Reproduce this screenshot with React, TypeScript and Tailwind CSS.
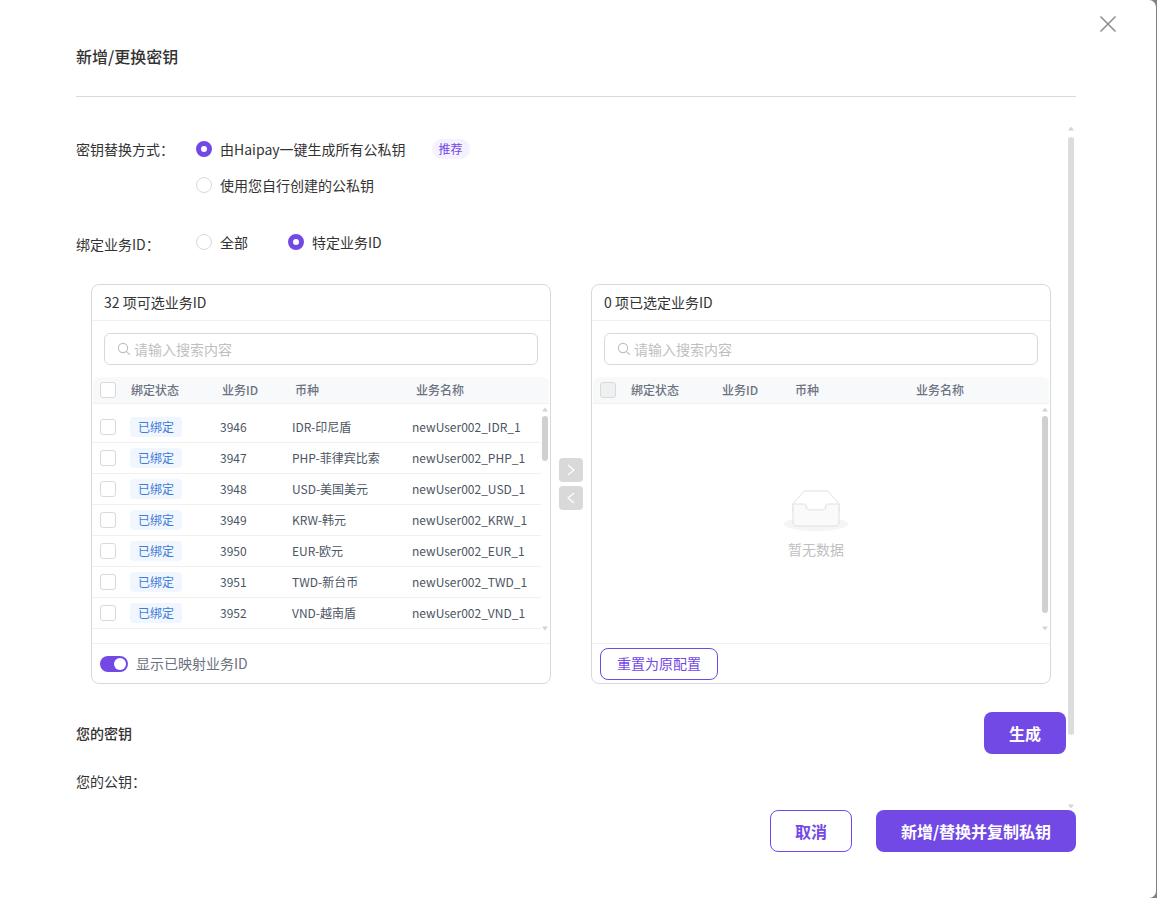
import React from 'react';

const rows = [
  { id: '3946', currency: 'IDR-印尼盾', name: 'newUser002_IDR_1' },
  { id: '3947', currency: 'PHP-菲律宾比索', name: 'newUser002_PHP_1' },
  { id: '3948', currency: 'USD-美国美元', name: 'newUser002_USD_1' },
  { id: '3949', currency: 'KRW-韩元', name: 'newUser002_KRW_1' },
  { id: '3950', currency: 'EUR-欧元', name: 'newUser002_EUR_1' },
  { id: '3951', currency: 'TWD-新台币', name: 'newUser002_TWD_1' },
  { id: '3952', currency: 'VND-越南盾', name: 'newUser002_VND_1' },
];

function Radio({ checked, label }: { checked?: boolean; label: string }) {
  return (
    <div className="flex items-center h-[22px]">
      <span
        className={
          checked
            ? 'w-4 h-4 rounded-full border-[5px] border-[#7349e5] bg-white'
            : 'w-4 h-4 rounded-full border border-[#d9d9d9] bg-white'
        }
      />
      <span className="ml-2 text-[14px] text-[#333]">{label}</span>
    </div>
  );
}

function Checkbox({ disabled }: { disabled?: boolean }) {
  return (
    <span
      className={
        disabled
          ? 'block w-4 h-4 rounded-[3px] border border-[#d9d9d9] bg-[#f0f0f0]'
          : 'block w-4 h-4 rounded-[3px] border border-[#d9d9d9] bg-white'
      }
    />
  );
}

// 滚动条只是画出来的，盖在内容上
function Scrollbar({ thumbTop, thumbHeight, className, color }: { thumbTop: number; thumbHeight: number; className: string; color: string }) {
  return (
    <div className={`absolute w-[6px] ${className}`}>
      <svg className="absolute -top-[1px] left-0" width="6" height="5" viewBox="0 0 6 5">
        <path d="M3 0.5L6 4.5H0z" fill="#d4d4d8" />
      </svg>
      <div className={`absolute left-0 w-[6px] rounded-[3px] ${color}`} style={{ top: thumbTop, height: thumbHeight }} />
      <svg className="absolute -bottom-[1px] left-0" width="6" height="5" viewBox="0 0 6 5">
        <path d="M3 4.5L6 0.5H0z" fill="#d4d4d8" />
      </svg>
    </div>
  );
}

function Search() {
  return (
    <div className="mx-3 mt-3 h-8 rounded-[6px] border border-[#d9d9d9] flex items-center pl-3">
      <svg width="14" height="14" viewBox="0 0 14 14" fill="none" stroke="#bfbfbf" strokeWidth="1.1">
        <circle cx="6" cy="6" r="4.6" />
        <path d="M9.4 9.4L12.8 12.8" />
      </svg>
      <span className="ml-[3px] text-[14px] text-[#bfbfbf]">请输入搜索内容</span>
    </div>
  );
}

function TableHead({ disabled }: { disabled?: boolean }) {
  return (
    <div className="mt-3 h-[27px] mx-[1px] bg-[#f8f9fb] border-b border-[#eef0f2] rounded-t-[6px] pl-[7px] grid grid-cols-[31px_91px_73px_121px_1fr] items-center text-[12px] font-medium text-[#6b7280]">
      <Checkbox disabled={disabled} />
      <span>绑定状态</span>
      <span>业务ID</span>
      <span>币种</span>
      <span>业务名称</span>
    </div>
  );
}

function EmptyIcon() {
  return (
    <svg width="64" height="41" viewBox="0 0 64 41">
      <g transform="translate(0 1)" fill="none" fillRule="evenodd">
        <ellipse fill="#f5f5f5" cx="32" cy="33" rx="32" ry="7" />
        <g fillRule="nonzero" stroke="#e0e0e0">
          <path d="M55 12.76L44.854 1.258C44.367.474 43.656 0 42.907 0H21.093c-.749 0-1.46.474-1.947 1.257L9 12.761V22h46v-9.24z" />
          <path
            d="M41.613 15.931c0-1.605.994-2.93 2.227-2.931H55v18.137C55 33.26 53.68 35 52.05 35h-40.1C10.32 35 9 33.259 9 31.137V13h11.16c1.233 0 2.227 1.323 2.227 2.928v.022c0 1.605 1.005 2.901 2.237 2.901h14.752c1.232 0 2.237-1.308 2.237-2.913v-.007z"
            fill="#fafafa"
          />
        </g>
      </g>
    </svg>
  );
}

function LeftPanel() {
  return (
    <div className="w-[460px] h-[400px] rounded-[8px] border border-[#d9d9d9] flex flex-col">
      <div className="h-[36px] border-b border-[#f0f0f0] px-3 flex items-center text-[14px] text-[#333]">32 项可选业务ID</div>
      <Search />
      <TableHead />
      <div className="relative h-[240px] pt-2 border-b border-[#f0f0f0]">
        {rows.map((r) => (
          <div key={r.id} className="w-[449px] h-[31px] border-b border-[#f0f0f0] pl-2 grid grid-cols-[30px_90px_72px_120px_1fr] items-center text-[12px] text-[#4b5563]">
            <Checkbox />
            <span className="w-[52px] h-5 rounded-[4px] bg-[#eff6fd] text-[#3f7bd9] flex items-center justify-center">已绑定</span>
            <span>{r.id}</span>
            <span>{r.currency}</span>
            <span>{r.name}</span>
          </div>
        ))}
        <Scrollbar className="left-[450px] top-[4px] bottom-[13px]" thumbTop={8} thumbHeight={45} color="bg-[#cfd0d2]" />
      </div>
      <div className="flex-1 pl-2 flex items-center">
        <span className="relative w-7 h-4 rounded-full bg-[#7349e5]">
          <span className="absolute right-[2px] top-[2px] w-3 h-3 rounded-full bg-white" />
        </span>
        <span className="ml-2 text-[14px] text-[#6b7280]">显示已映射业务ID</span>
      </div>
    </div>
  );
}

function RightPanel() {
  return (
    <div className="w-[460px] h-[400px] rounded-[8px] border border-[#d9d9d9] flex flex-col">
      <div className="h-[36px] border-b border-[#f0f0f0] px-3 flex items-center text-[14px] text-[#333]">0 项已选定业务ID</div>
      <Search />
      <TableHead disabled />
      <div className="relative h-[240px] border-b border-[#f0f0f0] flex flex-col items-center pt-[86px] pr-[10px]">
        <EmptyIcon />
        <span className="mt-[7px] text-[14px] text-[#bfbfbf] leading-[22px]">暂无数据</span>
        <Scrollbar className="left-[450px] top-[4px] bottom-[13px]" thumbTop={8} thumbHeight={197} color="bg-[#cfd0d2]" />
      </div>
      <div className="flex-1 pl-2 flex items-center">
        <button className="w-[118px] h-8 rounded-[8px] border border-[#7349e5] text-[14px] text-[#7349e5] bg-white">重置为原配置</button>
      </div>
    </div>
  );
}

export default function App() {
  return (
    <div className="w-[1157px] h-[898px] bg-[#808080] overflow-hidden" style={{ fontFamily: '"Noto Sans CJK SC", "Noto Sans", sans-serif' }}>
      <div className="relative w-[1156px] h-[898px] bg-white rounded-r-[7px] flex flex-col">
        {/* Header */}
        <div className="mx-[76px] w-[1000px] h-[97px] border-b border-[#d9d9d9] pt-[44px]">
          <h1 className="text-[16px] leading-6 font-medium text-[#333]">新增/更换密钥</h1>
        </div>
        <svg className="absolute left-[1099px] top-[15px]" width="18" height="18" viewBox="0 0 18 18" fill="none" stroke="#8c8c8c" strokeWidth="1.5">
          <path d="M1.5 1.5L16.5 16.5M16.5 1.5L1.5 16.5" />
        </svg>

        {/* Body */}
        <div className="relative mt-[30px] h-[681px] overflow-hidden pl-[76px]">
          <div className="flex pt-[11px]">
            <span className="w-[120px] text-[14px] leading-[22px] text-[#333]">密钥替换方式：</span>
            <div className="flex flex-col gap-[14px]">
              <div className="flex items-center">
                <Radio checked label="由Haipay一键生成所有公私钥" />
                <span className="ml-[26px] w-[38px] h-5 rounded-full bg-[#f5f1fe] text-[#7349e5] text-[12px] flex items-center justify-center">推荐</span>
              </div>
              <Radio label="使用您自行创建的公私钥" />
            </div>
          </div>
          <div className="flex mt-[35px]">
            <span className="w-[120px] text-[14px] leading-[22px] text-[#333] mt-[2px]">绑定业务ID：</span>
            <div className="flex gap-[40px]">
              <Radio label="全部" />
              <Radio checked label="特定业务ID" />
            </div>
          </div>

          <div className="flex ml-[15px] mt-[29px]">
            <LeftPanel />
            <div className="w-10 flex flex-col items-center justify-center gap-1">
              <span className="w-6 h-6 rounded-[4px] bg-[#d9d9d9] flex items-center justify-center">
                <svg width="8" height="12" viewBox="0 0 8 12" fill="none" stroke="#fff" strokeWidth="1.2"><path d="M1 1l6 5-6 5" /></svg>
              </span>
              <span className="w-6 h-6 rounded-[4px] bg-[#d9d9d9] flex items-center justify-center">
                <svg width="8" height="12" viewBox="0 0 8 12" fill="none" stroke="#fff" strokeWidth="1.2"><path d="M7 1L1 6l6 5" /></svg>
              </span>
            </div>
            <RightPanel />
          </div>

          <div className="mt-[28px] w-[990px] flex items-center justify-between">
            <span className="text-[14px] font-medium text-[#333]">您的密钥</span>
            <button className="w-[82px] h-[42px] rounded-[8px] bg-[#7349e5] text-white text-[16px] font-bold">生成</button>
          </div>
          <div className="mt-[16px] text-[14px] leading-[22px] text-[#333]">您的公钥：</div>

          <Scrollbar className="left-[1068px] top-0 bottom-0" thumbTop={10} thumbHeight={598} color="bg-[#dcdcde]" />
        </div>

        {/* Footer */}
        <div className="mt-[2px] mr-[80px] flex justify-end gap-6">
          <button className="w-[82px] h-[42px] rounded-[8px] border border-[#7349e5] bg-white text-[#7349e5] text-[16px] font-bold">取消</button>
          <button className="w-[200px] h-[42px] rounded-[8px] bg-[#7349e5] text-white text-[16px] font-bold">新增/替换并复制私钥</button>
        </div>
      </div>
    </div>
  );
}
